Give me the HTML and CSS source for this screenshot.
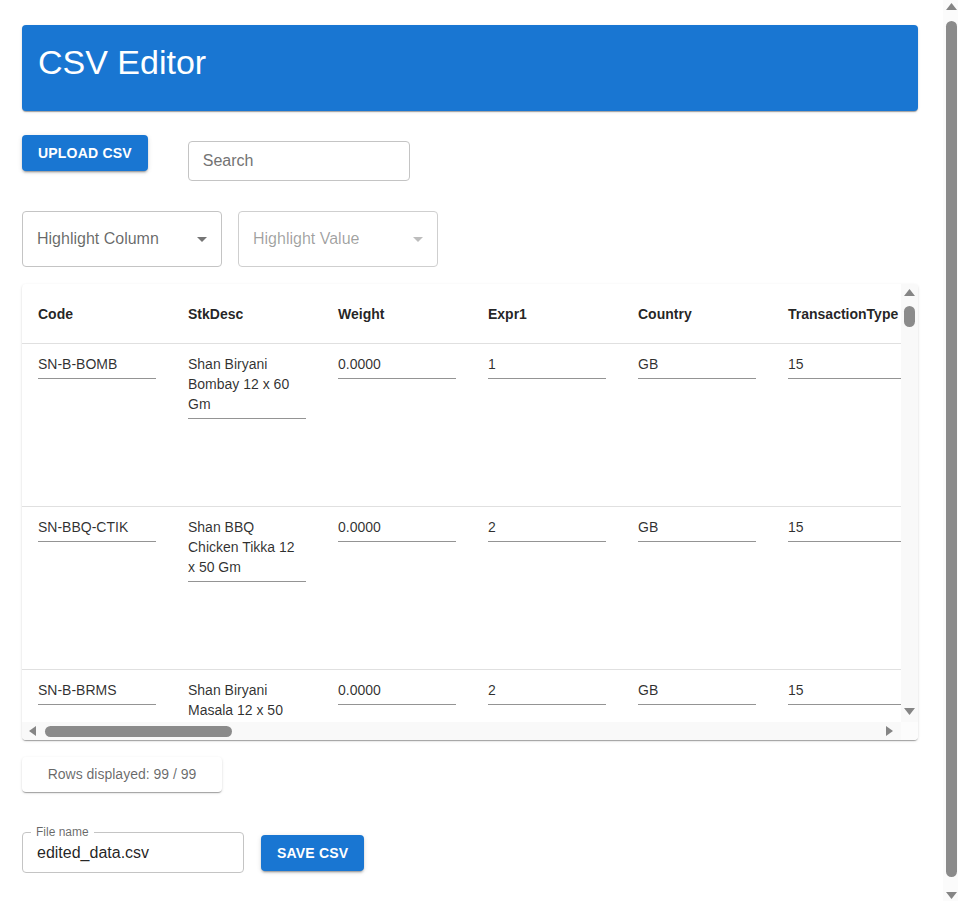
FILE: index.html
```html
<!DOCTYPE html>
<html lang="en">
<head>
<meta charset="utf-8">
<title>CSV Editor</title>
<link rel="stylesheet" href="styles.css">
</head>
<body>
<div class="page">
  <header class="title-bar">
    <h1 class="title">CSV Editor</h1>
  </header>

  <div class="toolbar">
    <button class="btn" type="button">Upload CSV</button>
    <input class="search" type="text" placeholder="Search">
  </div>

  <div class="filters">
    <div class="select">
      <span class="select-label">Highlight Column</span>
      <svg class="select-arrow" viewBox="0 0 24 24" width="24" height="24"><path d="M7 10l5 5 5-5z"/></svg>
    </div>
    <div class="select disabled">
      <span class="select-label">Highlight Value</span>
      <svg class="select-arrow" viewBox="0 0 24 24" width="24" height="24"><path d="M7 10l5 5 5-5z"/></svg>
    </div>
  </div>

  <div class="table-paper">
    <div class="table-viewport">
      <div class="table-inner" id="table"></div>
    </div>
    <div class="vscroll">
      <svg class="arrow" viewBox="0 0 11 7" width="11" height="7"><path d="M0 7L5.5 0L11 7z"/></svg>
      <div class="vthumb"></div>
      <div class="spacer"></div>
      <svg class="arrow" viewBox="0 0 11 7" width="11" height="7"><path d="M0 0L11 0L5.5 7z"/></svg>
    </div>
    <div class="hscroll">
      <svg class="arrow" viewBox="0 0 8 10" width="8" height="10"><path d="M8 0L8 10L1 5z"/></svg>
      <div class="hthumb"></div>
      <div class="spacer"></div>
      <svg class="arrow" viewBox="0 0 8 10" width="8" height="10"><path d="M0 0L7 5L0 10z"/></svg>
    </div>
    <div class="corner"></div>
  </div>

  <div class="rows-count">Rows displayed: 99 / 99</div>

  <div class="save-row">
    <fieldset class="file-field">
      <legend class="file-label">File name</legend>
      <input class="file-input" type="text" value="edited_data.csv">
    </fieldset>
    <button class="btn save" type="button">Save CSV</button>
  </div>
</div>

<div class="page-scrollbar">
  <svg class="arrow" viewBox="0 0 11 7" width="11" height="7"><path d="M0 7L5.5 0L11 7z"/></svg>
  <div class="page-thumb"></div>
  <svg class="arrow" viewBox="0 0 11 7" width="11" height="7"><path d="M0 0L11 0L5.5 7z"/></svg>
</div>
<script src="script.js"></script>
</body>
</html>
```

FILE: styles.css
```css
* { box-sizing: border-box; }

html, body {
  margin: 0;
  padding: 0;
  background: #fff;
  font-family: "Liberation Sans", Arial, Helvetica, sans-serif;
  color: rgba(0, 0, 0, 0.87);
}

.page {
  width: 896px;
  margin-left: 22px;
  padding-top: 25px;
  padding-bottom: 53px;
}

.title-bar {
  background: #1976d2;
  color: #fff;
  border-radius: 4px;
  padding: 16px;
  box-shadow: 0 2px 1px -1px rgba(0,0,0,0.2), 0 1px 1px 0 rgba(0,0,0,0.14), 0 1px 3px 0 rgba(0,0,0,0.12);
}

.title {
  margin: 0 0 12px;
  font-size: 34px;
  line-height: 42px;
  font-weight: 400;
}

.toolbar {
  display: flex;
  align-items: flex-start;
  margin-top: 24px;
}

.btn {
  font-family: inherit;
  font-size: 14px;
  font-weight: 700;
  letter-spacing: 0.2px;
  line-height: 24px;
  text-transform: uppercase;
  color: #fff;
  background: #1976d2;
  border: none;
  border-radius: 4px;
  padding: 6px 16px;
  height: 36px;
  box-shadow: 0 3px 1px -2px rgba(0,0,0,0.2), 0 2px 2px 0 rgba(0,0,0,0.14), 0 1px 5px 0 rgba(0,0,0,0.12);
}

.search {
  margin-left: 40px;
  margin-top: 6px;
  width: 222px;
  height: 40px;
  padding: 7.5px 14px;
  font-family: inherit;
  font-size: 16px;
  line-height: 23px;
  color: rgba(0,0,0,0.87);
  border: 1px solid #c4c4c4;
  border-radius: 4px;
  outline: none;
}
.search::placeholder { color: #737373; opacity: 1; }

.filters {
  display: flex;
  gap: 16px;
  margin-top: 30px;
}

.select {
  width: 200px;
  height: 56px;
  display: flex;
  align-items: center;
  justify-content: space-between;
  padding: 0 7px 0 14px;
  border: 1px solid #c4c4c4;
  border-radius: 4px;
  font-size: 16px;
  color: rgba(0,0,0,0.6);
}
.select-arrow { fill: rgba(0,0,0,0.54); }
.select.disabled { color: rgba(0,0,0,0.38); border-color: #cfcfcf; }
.select.disabled .select-arrow { fill: rgba(0,0,0,0.26); }

/* table card with its scrollbars */
.table-paper {
  margin-top: 17px;
  height: 456px;
  display: grid;
  grid-template-columns: 1fr 17px;
  grid-template-rows: 1fr 18px;
  overflow: hidden;
  background: #fff;
  border-radius: 4px;
  box-shadow: 0 2px 1px -1px rgba(0,0,0,0.2), 0 1px 1px 0 rgba(0,0,0,0.14), 0 1px 3px 0 rgba(0,0,0,0.12);
}

.table-viewport {
  overflow: hidden;
  min-width: 0;
  min-height: 0;
}

.table-inner { width: 3900px; }

.vscroll {
  background: #f9f9f9;
  display: flex;
  flex-direction: column;
  align-items: center;
  padding: 5px 0 7px;
}
.vthumb {
  width: 11px;
  height: 21px;
  margin-top: 10px;
  border-radius: 6px;
  background: #8b8b8b;
}
.hscroll {
  background: #f9f9f9;
  display: flex;
  align-items: center;
  padding: 0 7px 0 6px;
}
.hthumb {
  width: 187px;
  height: 11px;
  margin-left: 9px;
  border-radius: 6px;
  background: #8b8b8b;
}
.spacer { flex: 1; }
.corner { background: #fcfcfc; }
.arrow { fill: #858585; display: block; flex: none; }

.grid-row {
  display: grid;
  grid-template-columns: repeat(26, 150px);
  border-bottom: 1px solid #e0e0e0;
}

.grid-row.head {
  height: 60px;
  padding-top: 18px;
}
.th {
  padding: 0 16px;
  font-size: 14px;
  font-weight: 700;
  line-height: 24px;
  white-space: nowrap;
  color: rgba(0,0,0,0.87);
}

.grid-row.body { height: 163px; }
.td {
  padding: 6px 16px 0;
}
.field {
  font-size: 14px;
  line-height: 20px;
  padding: 4px 4px 4px 0;
  border-bottom: 1px solid rgba(0,0,0,0.42);
  color: rgba(0,0,0,0.82);
  min-height: 29px;
  overflow-wrap: break-word;
}

.rows-count {
  margin-top: 17px;
  width: 200px;
  padding: 8px 0;
  font-size: 14px;
  line-height: 19px;
  text-align: center;
  color: rgba(0,0,0,0.6);
  border-radius: 4px;
  box-shadow: 0 2px 1px -1px rgba(0,0,0,0.2), 0 1px 1px 0 rgba(0,0,0,0.14), 0 1px 3px 0 rgba(0,0,0,0.12);
}

.save-row {
  display: flex;
  align-items: flex-end;
  gap: 17px;
  margin-top: 34px;
}

.file-field {
  margin: 0;
  width: 222px;
  padding: 0 8px;
  border: 1px solid #c4c4c4;
  border-radius: 4px;
  min-width: 0;
}
.file-label {
  padding: 0 5px;
  font-size: 12px;
  line-height: 12px;
  color: rgba(0,0,0,0.6);
}
.file-input {
  display: block;
  width: calc(100% + 16px);
  margin: 0 -8px;
  padding: 3.5px 14px 7.5px;
  border: none;
  outline: none;
  background: transparent;
  font-family: inherit;
  font-size: 16px;
  line-height: 23px;
  height: 34px;
  color: rgba(0,0,0,0.87);
}

.btn.save { margin-bottom: 2px; padding: 6px 16px; }

/* browser window scrollbar */
.page-scrollbar {
  position: fixed;
  top: 0;
  right: 0;
  width: 15px;
  height: 100%;
  background: #fbfbfb;
  display: flex;
  flex-direction: column;
  align-items: center;
  justify-content: space-between;
  padding: 3px 0 2px 2px;
}
.page-thumb {
  flex: 1;
  width: 11px;
  margin: 11px 0 15px;
  border-radius: 6px;
  background: #8b8b8b;
}
```

FILE: script.js
```js
var columns = ["Code","StkDesc","Weight","Expr1","Country","TransactionType","NetMass","SuppUnits","InvoiceValue","StatValue","DeliveryTerms","TransportMode","PortCode","CommodityCode","Origin","Currency","Supplier","Reference","Date","Quantity","UnitPrice","VATRate","Category","Brand","PackSize","Barcode"];

var known = [
  ["SN-B-BOMB","Shan Biryani Bombay 12 x 60 Gm","0.0000","1","GB","15"],
  ["SN-BBQ-CTIK","Shan BBQ Chicken Tikka 12 x 50 Gm","0.0000","2","GB","15"],
  ["SN-B-BRMS","Shan Biryani Masala 12 x 50 Gm","0.0000","2","GB","15"]
];
var names = ["Chaat Masala","Chicken Karahi","Fish Biryani","Haleem Mix","Kofta Mix","Korma Mix","Nihari Mix","Pilau Biryani","Seekh Kabab","Tandoori Masala"];

var table = document.getElementById("table");
var html = '<div class="grid-row head">';
for (var c = 0; c < columns.length; c++) html += '<div class="th">' + columns[c] + '</div>';
html += '</div>';

for (var r = 0; r < 99; r++) {
  var base = known[r] || ["SN-" + (r + 1), "Shan " + names[r % names.length] + " 12 x 50 Gm", "0.0000", String((r % 3) + 1), "GB", "15"];
  html += '<div class="grid-row body">';
  for (var k = 0; k < columns.length; k++) {
    var v = k < base.length ? base[k] : "";
    html += '<div class="td"><div class="field">' + v + '</div></div>';
  }
  html += '</div>';
}
table.innerHTML = html;
```
